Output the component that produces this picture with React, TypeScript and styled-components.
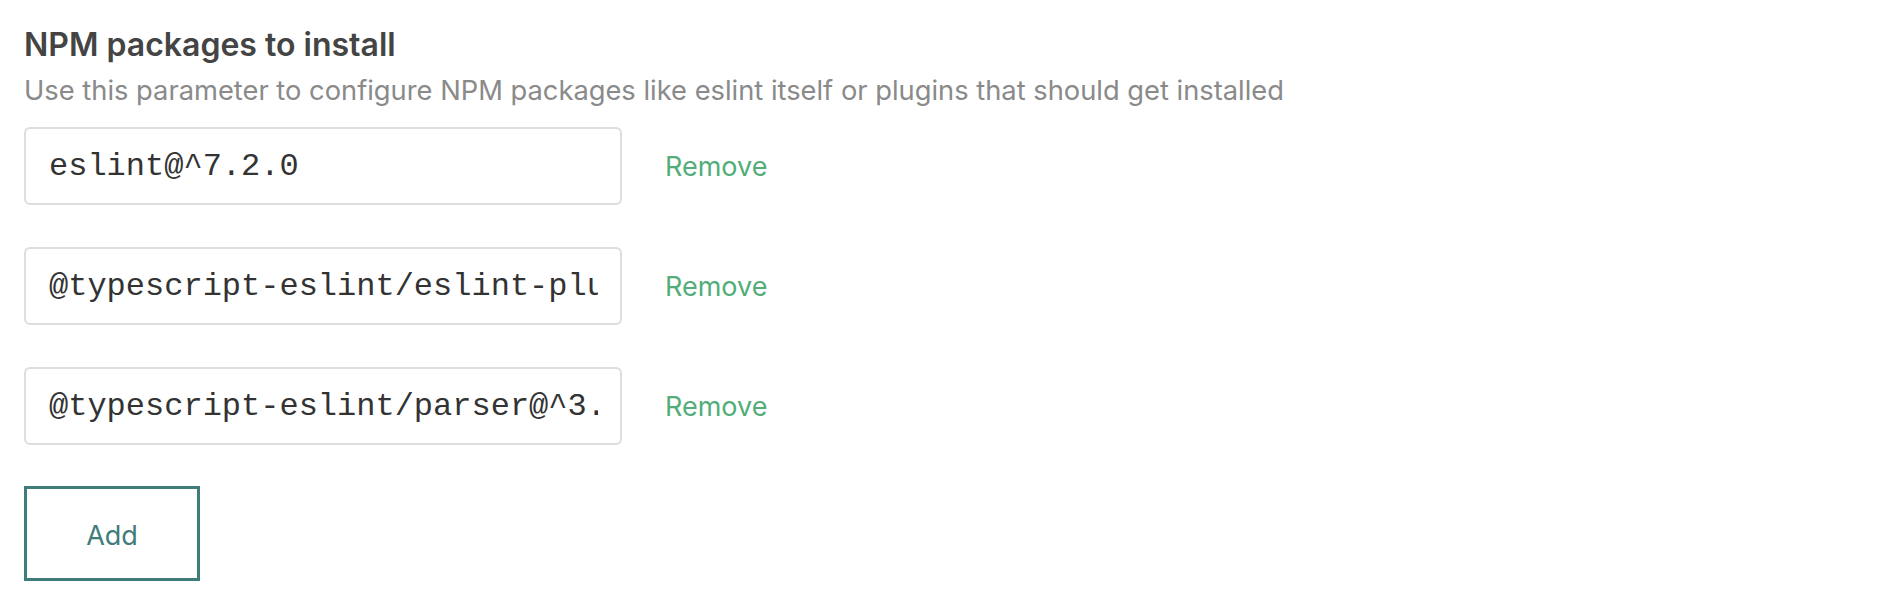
import styled, { createGlobalStyle } from "styled-components";

const GlobalStyle = createGlobalStyle`
  body {
    margin: 0;
    background: #fff;
    font-family: Inter, "Noto Sans", sans-serif;
  }
`;

const Section = styled.section`
  padding: 26px 24px 0;
`;

const Title = styled.h2`
  margin: 0;
  font-size: 32px;
  line-height: 38px;
  font-weight: 600;
  color: #444;
`;

const Description = styled.p`
  margin: 11px 0 20px;
  font-size: 27.3px;
  line-height: 32px;
  color: #8a8a8a;
`;

const List = styled.div`
  display: flex;
  flex-direction: column;
  gap: 42px;
`;

const Row = styled.div`
  display: flex;
  align-items: center;
  gap: 43px;
`;

const Field = styled.input`
  box-sizing: border-box;
  width: 598px;
  height: 78px;
  padding: 0 22px 0 23px;
  border: 2px solid #dedede;
  border-radius: 6px;
  font-family: "Liberation Mono", monospace;
  font-size: 32px;
  color: #333;
  background: #fff;
  outline: none;
`;

const RemoveLink = styled.a`
  font-size: 27px;
  color: #52ad79;
  cursor: pointer;
`;

const AddButton = styled.button`
  box-sizing: border-box;
  margin-top: 41px;
  width: 176px;
  height: 95px;
  padding: 4px 0 0;
  border: 3px solid #3f7c7a;
  background: #fff;
  color: #3f7c7a;
  font-family: inherit;
  font-size: 27px;
  cursor: pointer;
`;

const packages = [
  "eslint@^7.2.0",
  "@typescript-eslint/eslint-plugin@^3.2.0",
  "@typescript-eslint/parser@^3.2.0",
];

const App = () => {
  return (
    <>
      <GlobalStyle />
      <Section>
        <Title>NPM packages to install</Title>
        <Description>
          Use this parameter to configure NPM packages like eslint itself or
          plugins that should get installed
        </Description>
        <List>
          {packages.map((pkg) => (
            <Row key={pkg}>
              <Field defaultValue={pkg} />
              <RemoveLink>Remove</RemoveLink>
            </Row>
          ))}
        </List>
        <AddButton>Add</AddButton>
      </Section>
    </>
  );
};

export default App;
